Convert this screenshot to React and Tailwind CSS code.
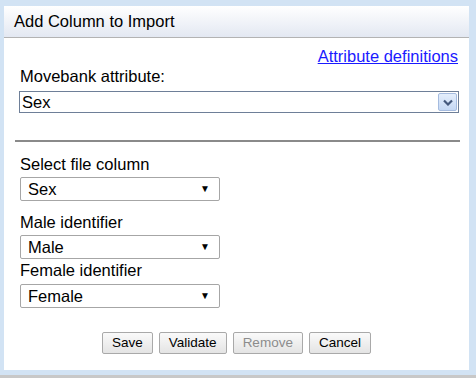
import React from "react";

// Small select-like box with a black triangle
function PlainSelect({ value }) {
  return (
    <div className="flex h-[24px] w-[200px] items-center justify-between rounded-[2px] border border-[#a6a6a6] bg-white pl-[7px] pr-[9px] text-[16.5px] text-black">
      <span>{value}</span>
      <span className="text-[10px] leading-none">▼</span>
    </div>
  );
}

function Btn({ children, disabled }) {
  return (
    <button
      type="button"
      className={
        "h-[22px] rounded-[2px] border border-[#a9a9a9] bg-gradient-to-b from-[#fafafa] to-[#e4e4e4] px-[9px] text-[13.5px] leading-none " +
        (disabled ? "text-[#8c8c8c]" : "text-black")
      }
    >
      {children}
    </button>
  );
}

export default function App() {
  return (
    <div
      className="flex h-[378px] w-[476px] flex-col bg-[#d2e3f4]"
      style={{ fontFamily: '"Liberation Sans", Arial, sans-serif' }}
    >
      <div className="flex flex-1 pl-[4px] pr-[7px] pt-[6px] pb-[5px]">
        <div className="flex flex-1 flex-col bg-white">
          {/* header */}
          <div className="flex h-[32px] items-center border-b border-[#b3b3b3] bg-gradient-to-b from-white to-[#e3e8f2] pl-[10px] text-[16.5px] text-black">
            Add Column to Import
          </div>

          <div className="flex flex-col pl-[15px] pr-[9px] text-[16.5px] leading-[18px] text-black">
            <div className="mt-[9px] flex justify-end pr-[2px]">
              <a href="#" className="text-[#1a1aff] underline">
                Attribute definitions
              </a>
            </div>
            <div className="mt-[2px] pl-px">Movebank attribute:</div>
            <div className="mt-[6px] flex h-[22px] w-[440px] items-center justify-between border border-[#6e7f98] pl-[2px] pr-px">
              <span>Sex</span>
              <span className="flex h-[18px] w-[19px] items-center justify-center rounded-[2px] border border-[#a5bbdf] bg-gradient-to-b from-[#e4eefc] to-[#c5d8f4]">
                <svg width="10" height="7" viewBox="0 0 10 7">
                  <path d="M1 1.5 L5 5.5 L9 1.5" fill="none" stroke="#44587c" strokeWidth="2.2" />
                </svg>
              </span>
            </div>

            <div className="mt-[27px] h-[2px] w-[445px] -ml-[4px] bg-[#8a8a8a]" />

            <div className="mt-[13px] pl-px">Select file column</div>
            <div className="mt-[4px] ml-px">
              <PlainSelect value="Sex" />
            </div>
            <div className="mt-[12px] pl-px">Male identifier</div>
            <div className="mt-[4px] ml-px">
              <PlainSelect value="Male" />
            </div>
            <div className="mt-[2px] pl-px">Female identifier</div>
            <div className="mt-[5px] ml-px">
              <PlainSelect value="Female" />
            </div>
          </div>

          <div className="mt-[24px] flex justify-center gap-[6px]">
            <Btn>Save</Btn>
            <Btn>Validate</Btn>
            <Btn disabled>Remove</Btn>
            <Btn>Cancel</Btn>
          </div>
        </div>
      </div>
      <div className="h-[3px] bg-[#c8c8c8]" />
    </div>
  );
}
